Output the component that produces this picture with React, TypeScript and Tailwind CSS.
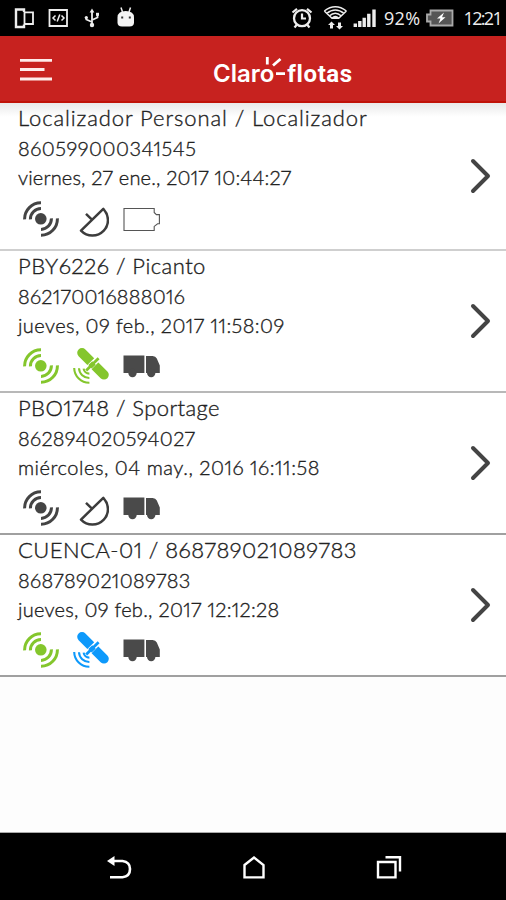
const DARK = "#444444";

function SignalIcon({ color }: { color: string }) {
  return (
    <svg width="36" height="36" viewBox="0 0 36 36" fill="none" stroke={color} strokeWidth="3">
      <circle cx="17.8" cy="17.8" r="5.8" fill={color} stroke="none" />
      <path d="M18 1.8A16.3 16.3 0 0 0 1.6 18.4M18 7.6A10.6 10.6 0 0 0 7.4 18.4M18 34.2A16.3 16.3 0 0 0 34.4 17.4M18 28.4A10.6 10.6 0 0 0 28.4 17.4" />
    </svg>
  );
}

function DishIcon() {
  return (
    <svg width="36" height="36" viewBox="0 0 36 36" fill="none" stroke="#3c3c3c" strokeWidth="2.5" strokeLinejoin="round">
      <path d="M8 29.6L30.3 7.8C36.2 14.2 36.6 23.6 30.8 29.6C24.6 36 14.5 36.4 8 29.6ZM13 12.8L19.2 18.8" />
    </svg>
  );
}

function SatelliteIcon({ color }: { color: string }) {
  return (
    <svg width="36" height="36" viewBox="0 0 36 36" fill="none">
      <path d="M9 4.8L31 26.8" stroke={color} strokeWidth="9.6" strokeLinecap="round" />
      <path d="M27.6 8L12.2 23.4" stroke="#fff" strokeWidth="6" />
      <path d="M25.6 10.2L13.2 22.4" stroke={color} strokeWidth="2.8" />
      <path d="M17 18.8L21 15" stroke={color} strokeWidth="5" />
      <path d="M1.2 20A15 15 0 0 0 16.4 34.8M6 20.2A10.2 10.2 0 0 0 16.4 30M10.6 20.6A5.8 5.8 0 0 0 16.4 25.6" stroke={color} strokeWidth="2.1" />
    </svg>
  );
}

function TruckIcon() {
  return (
    <svg width="38" height="36" viewBox="0 0 38 36" fill="#4a4a4a">
      <path d="M.5 7.5H21.4V25H.5ZM23 7.9H29.6Q32.6 7.9 33.8 10.4L36.8 17.4V25H23Z" />
      <circle cx="9.5" cy="25" r="4.2" />
      <circle cx="28.2" cy="25" r="4.2" />
    </svg>
  );
}

function BatteryOutline() {
  return (
    <svg width="38" height="36" viewBox="0 0 38 36" fill="none" stroke="#555" strokeWidth="1.1">
      <path d="M1 7.5H31.2V11.5L33.4 13.6H36.4V22.8H34.6L31.2 25.4V29.5H1Z" />
    </svg>
  );
}

type Row = {
  title: string;
  titleCls: string;
  id: string;
  idCls: string;
  date: string;
  dateCls: string;
  box: string;
  signal: string;
  satellite: string | null;
  vehicle: boolean;
};

const rows: Row[] = [
  { title: "Localizador Personal / Localizador", titleCls: "tracking-[0.91px]", id: "860599000341545", idCls: "tracking-[0.5px]", date: "viernes, 27 ene., 2017 10:44:27", dateCls: "tracking-[0.17px]", box: "h-[148px] border-[#cfcfcf]", signal: DARK, satellite: null, vehicle: false },
  { title: "PBY6226 / Picanto", titleCls: "tracking-[0.46px]", id: "862170016888016", idCls: "tracking-[0.26px]", date: "jueves, 09 feb., 2017 11:58:09", dateCls: "tracking-[0.42px]", box: "h-[142px] border-[#b8b8b8]", signal: "#84c62c", satellite: "#84c62c", vehicle: true },
  { title: "PBO1748 / Sportage", titleCls: "tracking-[0.4px]", id: "862894020594027", idCls: "tracking-[0.3px]", date: "miércoles, 04 may., 2016 16:11:58", dateCls: "tracking-[0.52px]", box: "h-[142px] border-[#a0a0a0]", signal: DARK, satellite: null, vehicle: true },
  { title: "CUENCA-01 / 868789021089783", titleCls: "tracking-[0.46px]", id: "868789021089783", idCls: "tracking-[0.3px]", date: "jueves, 09 feb., 2017 12:12:28", dateCls: "tracking-[0.28px]", box: "h-[142px] border-[#a0a0a0]", signal: "#84c62c", satellite: "#0d99fb", vehicle: true },
];

function ListRow({ row, first }: { row: Row; first: boolean }) {
  return (
    <li className={`flex items-center justify-between border-b-2 pl-[18px] pr-[14px] ${row.box}`}>
      <div className="flex h-full flex-col items-start whitespace-nowrap font-light proportional-nums text-[#222] [-webkit-text-stroke:0.35px_#222]">
        <span className={`text-[22px] leading-[30px] ${row.titleCls}`}>{row.title}</span>
        <span className={`text-[20px] leading-[30px] ${row.idCls}`}>{row.id}</span>
        <span className={`text-[20px] leading-[29px] ${row.dateCls}`}>{row.date}</span>
        <div className={`flex pl-[5px] ${first ? "mt-[9px]" : "mt-2"}`}>
          <SignalIcon color={row.signal} />
          <div className="ml-[14px] mr-[14px]">
            {row.satellite ? <SatelliteIcon color={row.satellite} /> : <DishIcon />}
          </div>
          {row.vehicle ? <TruckIcon /> : <BatteryOutline />}
        </div>
      </div>
      <svg width="24" height="36" viewBox="0 0 24 36" fill="none" stroke="#444" strokeWidth="4" strokeLinecap="round" strokeLinejoin="round">
        <path d="M5 3L20 18L5 33" />
      </svg>
    </li>
  );
}

export default function App() {
  return (
    <div className="flex h-[900px] w-[506px] flex-col overflow-hidden bg-[#fdfdfd] font-['Lato',sans-serif]">
      <header className="flex h-9 shrink-0 items-center bg-black text-[#eee]">
        <svg width="140" height="36" viewBox="0 0 140 36" fill="none" stroke="#eee" strokeWidth="1.8">
          <path d="M24 12V9.5H16V27H24V24.5" strokeWidth="2.4" />
          <path d="M24.5 12.3H33V24H24.5Z" />
          <path d="M49.5 10H67V26H49.5Z" />
          <path d="M55.5 15.5L53 18L55.5 20.5M61.5 15.5L64 18L61.5 20.5M59.8 14.5L57.2 21.5" strokeWidth="1.5" />
          <path d="M92 11V25M92 22L86.3 19.5V17M92 20L97.5 17.5V14" strokeWidth="1.8" />
          <path d="M89.6 12.4L92 8.5L94.4 12.4Z" fill="#eee" stroke="none" />
          <circle cx="92" cy="25" r="2.2" fill="#eee" stroke="none" />
          <circle cx="86.3" cy="17.6" r="1.6" fill="#eee" stroke="none" />
          <path d="M96 12.8H99V15.8H96Z" fill="#eee" stroke="none" />
          <path d="M117.5 17.5Q117.5 11 125.7 11Q134 11 134 17.5V22.5Q134 26.5 129.5 26.5H122Q117.5 26.5 117.5 22.5Z" fill="#f4f4f4" stroke="none" />
          <path d="M121 7.5L122.5 12M130.5 7.5L129 12" strokeWidth="1.5" />
          <path d="M121.2 17.5H123.2M128.8 17.5H130.8" stroke="#333" />
        </svg>
        <svg className="ml-[150px]" width="90" height="36" viewBox="290 0 90 36" fill="none" stroke="#eee" strokeWidth="1.9">
          <circle cx="302" cy="18.2" r="8" strokeWidth="2.3" />
          <path d="M302 13.5V18.5H306M292.5 12.5L297 8.8M311.5 12.5L307 8.8M297 24.5L294.5 27.5M307 24.5L309.5 27.5" strokeWidth="2.2" />
          <path d="M324.3 11Q335.3 2.5 346.4 11M326.5 13.6Q335.3 6.5 344.2 13.6M329.3 16Q335.3 10.5 341.4 16M332 18.3Q335.3 15 338.7 18.3M324.3 11L332 18.3H338.7L346.4 11" strokeWidth="1.5" />
          <path d="M331.5 21.5L335 25H333V28.5H330V25H328ZM339.5 29.5L336 26H338V22.5H341V26H343Z" fill="#eee" stroke="none" />
          <path d="M355.3 27V23.5M359.8 27V21M364.2 27V17.8M368.8 27V13.8M374 27V9.5" strokeWidth="3.4" />
        </svg>
        <span className="ml-[4px] font-['Open_Sans',sans-serif] text-[18px] leading-9 tracking-[0.3px]">92%</span>
        <svg className="ml-[5px]" width="30" height="36" viewBox="0 0 30 36" fill="none">
          <path d="M5.5 10.5H27.5V25.5H5.5V21.5H2V14.5H5.5Z" fill="#555" stroke="#aaa" strokeWidth="1.8" />
          <path d="M19 12.5L12 18.5H15.5L13.5 23.5L20.5 17.3H17Z" fill="#fff" />
        </svg>
        <span className="ml-auto mr-[5px] font-['Open_Sans',sans-serif] text-[18px] leading-9 tracking-[-1.7px]">12:21</span>
      </header>
      <div className="flex h-[67px] shrink-0 items-start border-b-2 border-[#c01208] bg-[#c7221f] text-white">
        <svg className="ml-5 mt-[22px]" width="32" height="23" viewBox="0 0 32 23" stroke="#ffecea" strokeWidth="2.8">
          <path d="M0 2.3H32M0 11.5H24.5M0 21H32" />
        </svg>
        <div className="relative ml-[161px] flex items-baseline whitespace-nowrap pt-[23px] leading-[30px]">
          <span className="font-['Inter',sans-serif] text-[24px] font-semibold">Claro</span>
          <span className="ml-[13px] font-['Roboto',sans-serif] text-[24px] font-bold tracking-[0.6px]">flotas</span>
          <svg className="absolute left-[49px] top-[18px]" width="26" height="26" viewBox="0 0 26 26" stroke="#fff" strokeWidth="2.8" fill="none">
            <path d="M5.3 3V10.5M18.5 5L11 11.5M14 19.7H23" />
          </svg>
        </div>
      </div>
      <ul className="shrink-0 bg-gradient-to-b from-[#e9e9e9] to-white to-[2.4%]">
        {rows.map((row, i) => (
          <ListRow key={row.title} row={row} first={i === 0} />
        ))}
      </ul>
      <div className="flex-1 border-b border-[#aaa]" />
      <nav className="flex h-[67px] shrink-0 items-center justify-between bg-black pl-[106px] pr-[104px]">
        <svg width="27" height="26" viewBox="0 0 27 26" fill="none" stroke="#fff" strokeWidth="2.6">
          <path d="M7 7H16.5Q24 8 24 15Q24 22.5 16.5 23.2H4" />
          <path d="M1 7L8.5 2V12Z" fill="#fff" stroke="none" />
        </svg>
        <svg width="24" height="26" viewBox="1 0 24 26" fill="none" stroke="#fff" strokeWidth="2.4">
          <path d="M2.5 11L12 3.5L21.5 11V23.4H2.5Z" />
        </svg>
        <svg width="26" height="26" viewBox="0 0 26 26" fill="none" stroke="#fff" strokeWidth="2.4">
          <path d="M2 8H19.5V23.4H2Z" />
          <path d="M9.5 3.2H24V17.5" />
        </svg>
      </nav>
    </div>
  );
}
